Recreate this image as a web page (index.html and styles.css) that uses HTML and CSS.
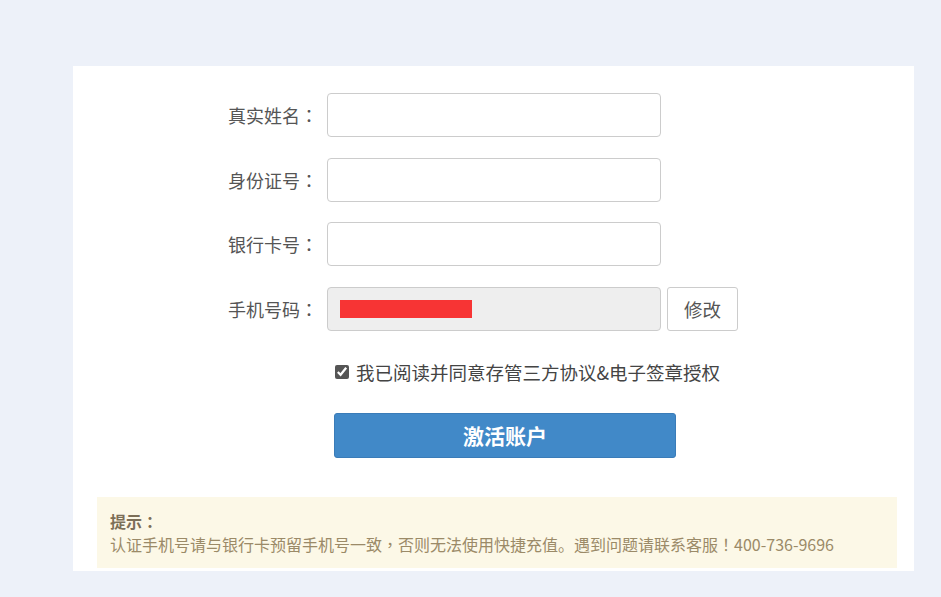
FILE: index.html
```html
<!DOCTYPE html>
<html>
<head>
    <title>激活账户</title>
    <link rel="stylesheet" href="styles.css">
</head>
<body>
    <div class="panel">
        <!-- 开户信息 -->
        <form class="account-form">
            <div class="form-row">
                <label class="form-label">真实姓名<span class="colon">：</span></label>
                <input class="form-input" type="text">
            </div>
            <div class="form-row">
                <label class="form-label">身份证号<span class="colon">：</span></label>
                <input class="form-input" type="text">
            </div>
            <div class="form-row">
                <label class="form-label">银行卡号<span class="colon">：</span></label>
                <input class="form-input" type="text">
            </div>
            <div class="form-row">
                <label class="form-label">手机号码<span class="colon">：</span></label>
                <div class="form-input readonly"><span class="masked"></span></div>
                <button class="edit-button" type="button">修改</button>
            </div>

            <div class="agree-row">
                <input class="agree-check" type="checkbox" checked>
                <span>我已阅读并同意存管三方协议&amp;电子签章授权</span>
            </div>

            <div class="submit-row">
                <button class="submit-button" type="button">激活账户</button>
            </div>
        </form>

        <!-- 提示 -->
        <div class="tips">
            <p class="tips-title">提示<span class="colon">：</span></p>
            <p class="tips-text">认证手机号请与银行卡预留手机号一致<span class="colon">，</span>否则无法使用快捷充值。遇到问题请联系客服<span class="colon">！</span>400-736-9696</p>
        </div>
    </div>
</body>
</html>
```

FILE: styles.css
```css
body {
    margin: 0;
    background-color: #edf1f9;
    font-family: "Microsoft YaHei", "Noto Sans CJK SC", "Noto Sans", sans-serif;
    color: #555;
}

.colon {
    font-family: "Noto Sans CJK TC", sans-serif;
}

.panel {
    width: 841px;
    height: 505px;
    margin: 66px 0 0 73px;
    background-color: #fff;
    box-sizing: border-box;
    padding-top: 27px;
}

.account-form {
    margin: 0;
}

.form-row {
    display: flex;
    align-items: center;
    height: 44px;
    margin-bottom: 20.5px;
}

.form-label {
    width: 245px;
    margin-right: 9px;
    text-align: right;
    font-size: 18px;
    color: #555;
}

.form-input {
    width: 334px;
    height: 44px;
    box-sizing: border-box;
    border: 1px solid #ccc;
    border-radius: 4px;
    background-color: #fff;
    padding: 0 12px;
    font-size: 16px;
    outline: none;
}

.readonly {
    display: flex;
    align-items: center;
    background-color: #eee;
}

.masked {
    display: block;
    width: 132px;
    height: 18px;
    background-color: #f73434;
}

.edit-button {
    width: 71px;
    height: 44px;
    margin-left: 6px;
    border: 1px solid #ccc;
    border-radius: 3px;
    background-color: #fff;
    color: #555;
    font-family: inherit;
    font-size: 18.5px;
}

.agree-row {
    display: flex;
    align-items: center;
    margin: 28px 0 0 262px;
    font-size: 18.5px;
    color: #444;
}

.agree-check {
    width: 14px;
    height: 14px;
    margin: 0 7px 0 0;
    accent-color: #555;
}

.submit-row {
    margin: 28px 0 0 261px;
}

.submit-button {
    width: 342px;
    height: 45px;
    border: 1px solid #3a7cb8;
    border-radius: 3px;
    background-color: #4189c8;
    color: #fff;
    font-family: inherit;
    font-size: 21px;
    font-weight: bold;
}

.tips {
    width: 800px;
    height: 71px;
    box-sizing: border-box;
    margin: 39px 0 0 24px;
    padding: 13px 13px 0;
    background-color: #fcf8e7;
}

.tips p {
    margin: 0;
    line-height: 23px;
    font-size: 16px;
}

.tips-title {
    font-weight: bold;
    color: #7c6f58;
}

.tips-text {
    color: #9b8a68;
}
```
